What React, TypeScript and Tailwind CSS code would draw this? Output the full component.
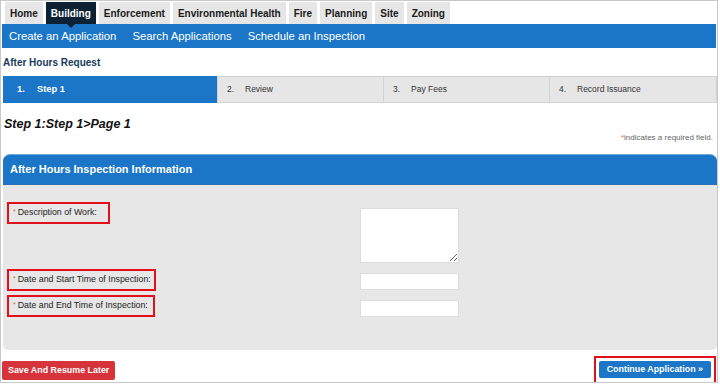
import React from "react";

const tabs = ["Home", "Building", "Enforcement", "Environmental Health", "Fire", "Planning", "Site", "Zoning"];

function Label({ text, extra }: { text: string; extra?: string }) {
  return (
    <div className={"inline-flex items-center border-2 border-[#e3101c] pl-[4px] h-[22px] text-[8.8px] text-[#222] " + (extra ?? "pr-[3px]")}>
      <span className="text-[#e8702a] text-[7px] mr-[2px] -mt-[2px]">*</span>
      {text}
    </div>
  );
}

export default function App() {
  return (
    <div
      className="w-[718px] h-[383px] border border-[#c9c9c9] bg-white relative overflow-hidden"
      style={{ fontFamily: '"Liberation Sans", Arial, sans-serif' }}
    >
      {/* top tabs */}
      <div className="flex gap-[3px] pl-[4px] pt-[1px] h-[23px]">
        {tabs.map((t) => (
          <div
            key={t}
            className={
              t === "Building"
                ? "relative bg-[#0c2134] text-white text-[10px] font-bold px-[5px] flex items-center"
                : "bg-[#e6e6e6] text-[#1a1a1a] text-[10px] font-bold px-[5px] flex items-center"
            }
          >
            {t}
            {t === "Building" && (
              <div className="absolute left-1/2 -translate-x-1/2 -bottom-[4px] w-0 h-0 border-l-[4px] border-r-[4px] border-t-[4px] border-l-transparent border-r-transparent border-t-[#0c2134] z-10" />
            )}
          </div>
        ))}
      </div>
      {/* blue nav */}
      <div className="ml-[1px] w-[714px] h-[24px] bg-[#1b76c8] flex items-center gap-[16px] pl-[7px] text-white text-[11.3px]">
        <span>Create an Application</span>
        <span>Search Applications</span>
        <span>Schedule an Inspection</span>
      </div>
      {/* After hours request */}
      <div className="pl-[2px] mt-[8px] text-[10px] font-bold text-[#173a5e] h-[13px] leading-[13px]">
        After Hours Request
      </div>
      {/* steps */}
      <div className="mt-[7px] ml-[2px] w-[714px] h-[27px] flex text-[8.5px]">
        <div className="w-[214px] bg-[#1b76c8] text-white font-bold text-[9.3px] flex items-center pl-[14px]">
          <span className="w-[20px]">1.</span>
          <span>Step 1</span>
        </div>
        <div className="w-[167px] bg-[#e6e6e6] border border-[#d2d2d2] text-[#333] flex items-center pl-[9px]">
          <span className="w-[18px]">2.</span>
          <span>Review</span>
        </div>
        <div className="w-[166px] bg-[#e6e6e6] border border-l-0 border-[#d2d2d2] text-[#333] flex items-center pl-[9px]">
          <span className="w-[18px]">3.</span>
          <span>Pay Fees</span>
        </div>
        <div className="flex-1 bg-[#e6e6e6] border border-l-0 border-[#d2d2d2] text-[#333] flex items-center pl-[9px]">
          <span className="w-[18px]">4.</span>
          <span>Record Issuance</span>
        </div>
      </div>
      {/* step title */}
      <div className="pl-[3px] mt-[13px] text-[12.5px] font-bold italic text-[#111] h-[16px] leading-[16px]">
        Step 1:Step 1&gt;Page 1
      </div>
      <div className="pr-[4px] text-right text-[8px] text-[#666] h-[11px] leading-[11px] mt-[0px]">
        <span className="text-[#e8702a]">*</span>indicates a required field.
      </div>
      {/* section */}
      <div className="ml-[2px] mt-[11px] w-[714px]">
        <div className="h-[30px] bg-[#1b76c8] rounded-t-[7px] border-t border-[#6aa7dc] flex items-center pl-[7px] text-white text-[11px] font-bold">
          After Hours Inspection Information
        </div>
        <div className="h-[166px] bg-[#e7e7e7] rounded-b-[5px] border-t border-[#2d6fb0] relative flex">
          <div className="w-[357px] pl-[4px] pt-[17px] flex flex-col items-start">
            <Label text="Description of Work:" extra="pr-[11px]" />
            <div className="h-[45px]" />
            <Label text="Date and Start Time of Inspection:" />
            <div className="h-[4px]" />
            <Label text="Date and End Time of Inspection:" extra="pr-[5px]" />
          </div>
          <div className="pt-[23px] flex flex-col">
            <textarea className="w-[99px] h-[55px] bg-white border border-[#dcdcdc] resize-y outline-none" />
            <input className="mt-[10px] w-[99px] h-[17px] bg-white border border-[#dcdcdc] outline-none" />
            <input className="mt-[10px] w-[99px] h-[17px] bg-white border border-[#dcdcdc] outline-none" />
          </div>
        </div>
      </div>
      {/* buttons */}
      <div className="flex justify-between items-start mt-[6px] pl-[1px] pr-[1px]">
        <div className="mt-[5px] h-[19px] px-[6px] bg-[#d7333b] rounded-[2px] text-white text-[8.9px] font-bold flex items-center">
          Save And Resume Later
        </div>
        <div className="border-2 border-[#e3101c] px-[3px] pt-[3px] pb-[4px]">
          <div className="h-[17px] px-[8px] bg-[#1b76c8] rounded-[2px] text-white text-[8.9px] font-bold flex items-center">
            Continue Application »
          </div>
        </div>
      </div>
    </div>
  );
}
